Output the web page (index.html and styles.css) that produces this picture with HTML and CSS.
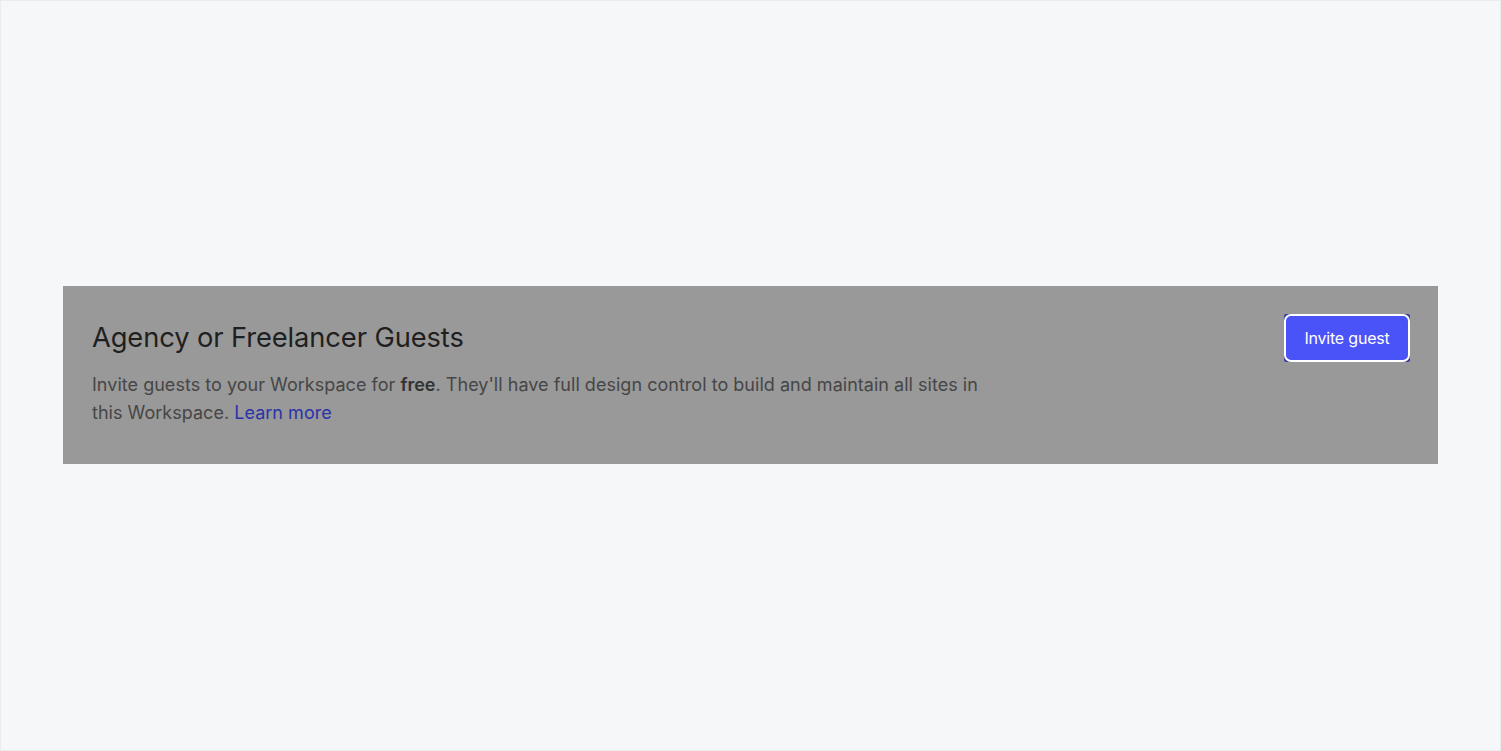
FILE: index.html
```html
<!DOCTYPE html>
<html>
<head>
<meta charset="utf-8">
<link rel="stylesheet" href="styles.css">
</head>
<body>
<div class="page">
  <section class="card">
    <div class="content">
      <h2 class="title">Agency or Freelancer Guests</h2>
      <p class="desc">Invite guests to your Workspace for <strong>free</strong>. They'll have full design control to build and maintain all sites in this Workspace. <a href="#" class="link">Learn more</a></p>
    </div>
    <button class="btn"><span class="btn-label">Invite guest</span></button>
  </section>
</div>
</body>
</html>
```
FILE: styles.css
```css
html, body {
  margin: 0;
  padding: 0;
  height: 100%;
}
body {
  background: #f6f7f9;
  font-family: Inter, "Noto Sans", sans-serif;
}
.page {
  height: 100%;
  box-sizing: border-box;
  border: 1px solid #ececee;
  display: flex;
  align-items: center;
  padding: 0 62px 2px;
}
.card {
  flex: 1;
  background: #999999;
  display: flex;
  justify-content: space-between;
  align-items: flex-start;
  padding: 28px 28px 34px 29px;
  box-sizing: border-box;
  height: 178px;
}
.content {
  max-width: 900px;
}
.title {
  margin: 0;
  font-size: 27.3px;
  font-weight: 400;
  line-height: 47px;
  color: #1f1f1f;
  letter-spacing: -0.1px;
}
.desc {
  margin: 10px 0 0;
  font-size: 18px;
  line-height: 28px;
  color: #464646;
  letter-spacing: 0.025px;
}
.desc strong {
  font-weight: 600;
  color: #333;
}
.link {
  color: #2a33a8;
  text-decoration: none;
}
.btn {
  position: relative;
  font-family: Inter, "Noto Sans", sans-serif;
  font-size: 16px;
  color: #ffffff;
  background: #383d9c;
  border: none;
  border-radius: 2px;
  width: 126px;
  height: 48px;
  padding: 0;
  cursor: pointer;
  letter-spacing: -0.2px;
}
.btn::before {
  content: "";
  position: absolute;
  inset: 0;
  background: #4a53f7;
  border: 2px solid #ffffff;
  border-radius: 7px;
}
.btn-label {
  position: relative;
}
```
